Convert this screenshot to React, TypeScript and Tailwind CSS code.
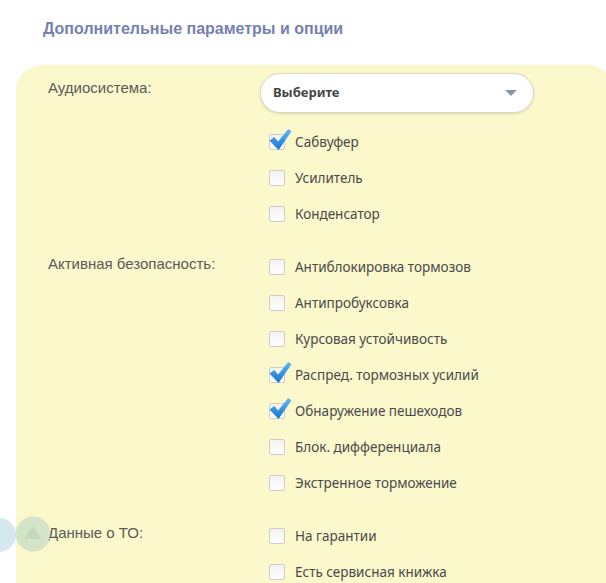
import React from 'react';

type Option = { label: string; checked?: boolean };

const audio: Option[] = [
    { label: 'Сабвуфер', checked: true },
    { label: 'Усилитель' },
    { label: 'Конденсатор' },
];

const safety: Option[] = [
    { label: 'Антиблокировка тормозов' },
    { label: 'Антипробуксовка' },
    { label: 'Курсовая устойчивость' },
    { label: 'Распред. тормозных усилий', checked: true },
    { label: 'Обнаружение пешеходов', checked: true },
    { label: 'Блок. дифференциала' },
    { label: 'Экстренное торможение' },
];

const service: Option[] = [
    { label: 'На гарантии' },
    { label: 'Есть сервисная книжка' },
];

const Tick = () => (
    <svg viewBox="0 0 24 24" className="absolute left-[-1px] top-[-7px] h-[23px] w-[23px]">
        <defs>
            <linearGradient id="tick" x1="0" y1="0" x2="0" y2="1">
                <stop offset="0" stopColor="#62bbf6" />
                <stop offset="1" stopColor="#1273d2" />
            </linearGradient>
        </defs>
        <path d="M0.5 13 L5.5 9.5 L9.5 14 L20 1 L23.5 3.5 L10 23 Z" fill="url(#tick)" />
    </svg>
);

const CheckRow = ({ option }: { option: Option }) => (
    <div className="flex h-[36px] items-center">
        <span className="relative ml-[9px] h-[16px] w-[16px] rounded-[2px] border border-[#d6c9c9] bg-gradient-to-b from-[#f2f2f2] to-[#ffffff]">
            {option.checked && <Tick />}
        </span>
        <span className="ml-[10px] text-[13.5px] text-[#4a4a4a]">{option.label}</span>
    </div>
);

const Section = ({ title, options, children }: { title: string; options: Option[]; children?: React.ReactNode }) => (
    <div className="flex">
        <div className="w-[212px] pt-[4px] text-[15px] text-[#5a5a5a] [font-family:'Liberation_Sans',Arial,sans-serif]">
            {title}
        </div>
        <div className="flex flex-col">
            {children}
            {options.map((o) => (
                <CheckRow key={o.label} option={o} />
            ))}
        </div>
    </div>
);

export default function App() {
    return (
        <div className="relative h-[583px] w-[606px] overflow-hidden bg-white [font-family:'Noto_Sans','Open_Sans',sans-serif]">
            <h2 className="pl-[43px] pt-[17px] text-[16px] font-bold text-[#7680b0] [font-family:'Liberation_Sans',Arial,sans-serif]">
                Дополнительные параметры и опции
            </h2>
            <div className="ml-[16px] mt-[24px] w-[598px] rounded-[26px] bg-[#fbf8cc] pl-[32px] pt-[8px] pb-[40px]">
                <Section title="Аудиосистема:" options={audio}>
                    <div className="mb-[11px] flex h-[40px] w-[274px] items-center justify-between rounded-full border border-[#ddd9c0] bg-white pl-[12px] pr-[16px] shadow-[0_1px_3px_rgba(0,0,0,0.12)]">
                        <span className="text-[13px] font-bold text-[#444]">Выберите</span>
                        <span className="h-0 w-0 border-x-[6px] border-t-[6px] border-x-transparent border-t-[#8a97a6]" />
                    </div>
                </Section>
                <div className="mt-[17px]">
                    <Section title="Активная безопасность:" options={safety} />
                </div>
                <div className="mt-[17px]">
                    <Section title="Данные о ТО:" options={service} />
                </div>
            </div>

            <div className="absolute left-[-18px] top-[518px] h-[34px] w-[34px] rounded-full bg-[#c9e2ea] opacity-80" />
            <div className="absolute left-[16px] top-[517px] flex h-[34px] w-[34px] items-center justify-center rounded-full bg-[#d3e4c9] shadow-[0_0_2px_rgba(0,0,0,0.15)]">
                <span className="mb-[4px] h-0 w-0 border-x-[9px] border-b-[13px] border-x-transparent border-b-[#c4d8bd]" />
            </div>
        </div>
    );
}
